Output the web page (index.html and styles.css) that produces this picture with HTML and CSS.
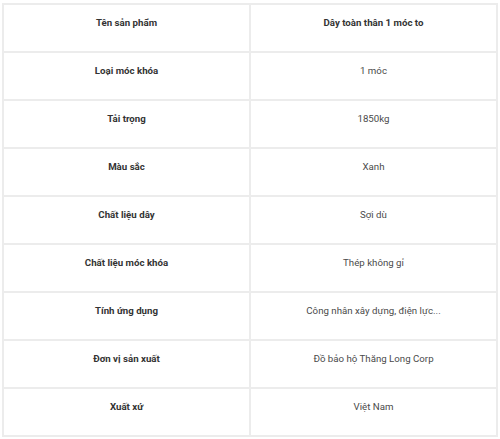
FILE: index.html
```html
<!DOCTYPE html>
<html lang="vi">
<head>
<meta charset="utf-8">
<link rel="stylesheet" href="styles.css">
</head>
<body>
<table class="spec">
  <tbody>
    <tr><th>Tên sản phẩm</th><th>Dây toàn thân 1 móc to</th></tr>
    <tr><th>Loại móc khóa</th><td>1 móc</td></tr>
    <tr><th>Tải trọng</th><td>1850kg</td></tr>
    <tr><th>Màu sắc</th><td>Xanh</td></tr>
    <tr><th>Chất liệu dây</th><td>Sợi dù</td></tr>
    <tr><th>Chất liệu móc khóa</th><td>Thép không gỉ</td></tr>
    <tr><th>Tính ứng dụng</th><td>Công nhân xây dựng, điện lực...</td></tr>
    <tr><th>Đơn vị sản xuất</th><td>Đồ bảo hộ Thăng Long Corp</td></tr>
    <tr><th>Xuất xứ</th><td>Việt Nam</td></tr>
  </tbody>
</table>
</body>
</html>
```
FILE: styles.css
```css
html, body {
  margin: 0;
  background: #fff;
}
body {
  padding: 3px 2px 0 2px;
  font-family: Roboto, "Liberation Sans", Arial, sans-serif;
}
.spec {
  width: 496px;
  border-collapse: collapse;
  table-layout: fixed;
  border: 2px solid #ececec;
}
.spec th, .spec td {
  border: 2px solid #ececec;
  height: 46px;
  box-sizing: border-box;
  padding: 11px 6px 21px;
  text-align: center;
  vertical-align: top;
  font-size: 9.7px;
  line-height: 14px;
}
.spec th {
  font-weight: 700;
  color: #333;
}
.spec td {
  font-weight: 400;
  color: #4a4a4a;
}
```
